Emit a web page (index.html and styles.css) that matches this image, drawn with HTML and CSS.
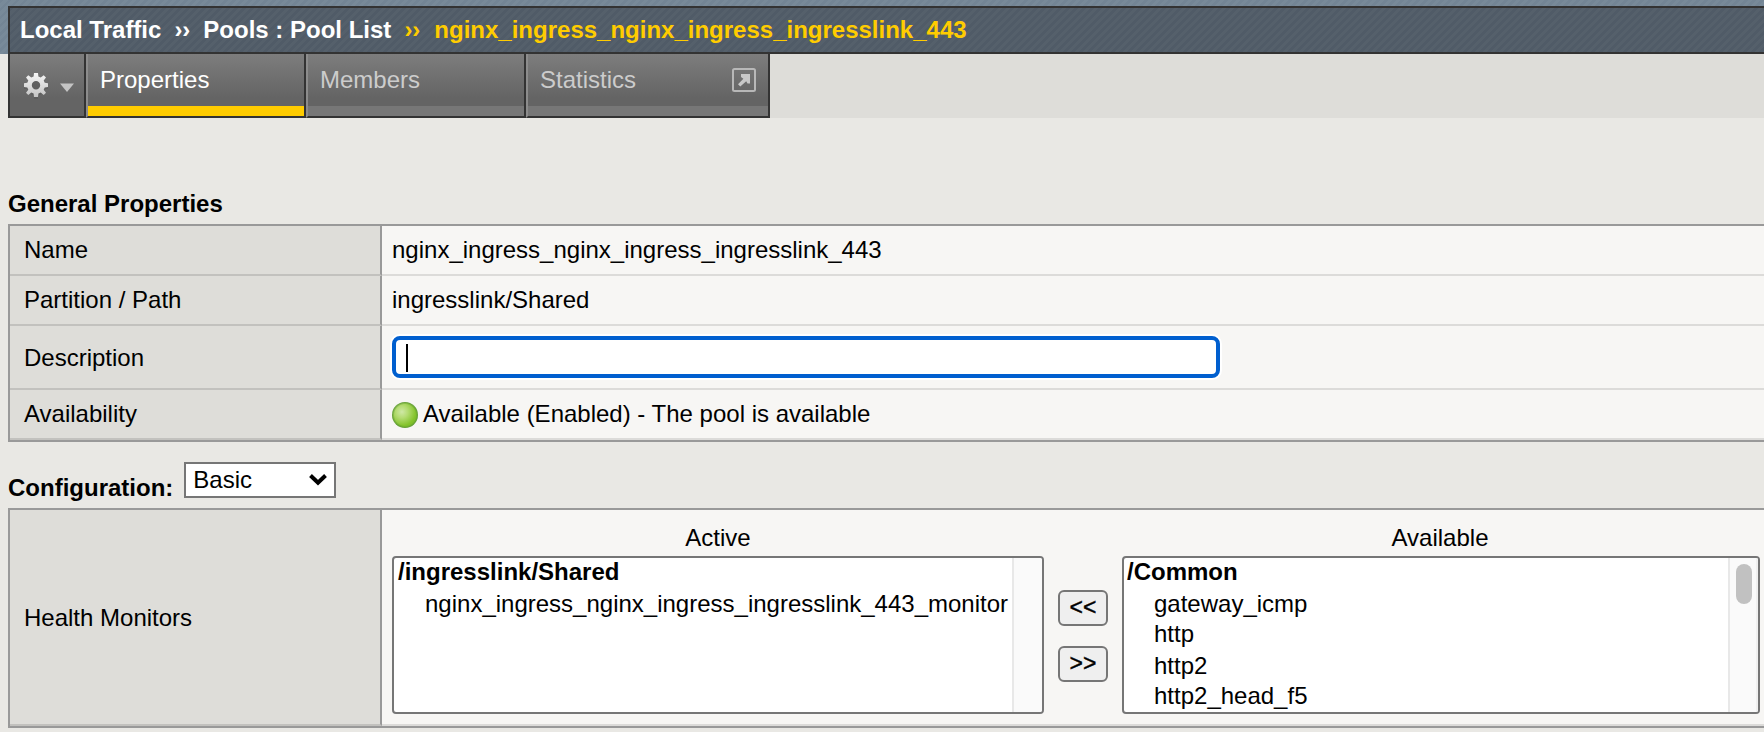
FILE: index.html
```html
<!DOCTYPE html>
<html lang="en">
<head>
<meta charset="utf-8">
<title>Pool Properties</title>
<link rel="stylesheet" href="styles.css">
</head>
<body>
<header class="top">
  <nav class="crumbs"><span class="crumb">Local Traffic</span><span class="sep">››</span><span class="crumb crumb-mid">Pools : Pool List</span><span class="sep current">››</span><span class="crumb current">nginx_ingress_nginx_ingress_ingresslink_443</span></nav>
  <div class="tabbar">
    <div class="tab gear">
      <svg class="gear-icon" width="26" height="28" viewBox="0 0 26 28">
        <defs><linearGradient id="gg" x1="0" y1="0" x2="0" y2="1"><stop offset="0" stop-color="#f6f6f6"/><stop offset="1" stop-color="#c4c4c4"/></linearGradient></defs>
        <g fill="#555" opacity=".5" transform="translate(0 2)"><circle cx="13" cy="13" r="9"/><path d="M11 1h4v24h-4zM1 11h24v4H1z"/></g>
        <g fill="url(#gg)">
          <path fill-rule="evenodd" d="M11 1h4l.4 3.600 2.300 1 3-2.400 2.300 2.300-2.300 3 1 2.300 3.300.4v3.800l-3.300.4-1 2.300 2.300 3-2.300 2.300-3-2.400-2.300 1L15 25h-4l-.4-3.400-2.300-1-3 2.400L3 20.700l2.300-3-1-2.300L1 15v-3.800l3.300-.4 1-2.300L3 5.500l2.300-2.300 3 2.400 2.300-1zM13 9a4.200 4.200 0 1 0 0 8.400A4.200 4.200 0 1 0 13 9z"/>
        </g>
      </svg>
      <svg class="drop-icon" width="16" height="10" viewBox="0 0 16 10"><path d="M1 .5h14L8 9z" fill="#c4c4c4"/></svg>
    </div>
    <div class="tab page active">Properties</div>
    <div class="tab page">Members</div>
    <div class="tab page stats">Statistics
      <svg class="ext" width="24" height="24" viewBox="0 0 24 24"><rect x="1" y="1" width="22" height="22" rx="1.500" fill="none" stroke="#b8b8b8" stroke-width="2"/><path d="M9 6h9v9.500h-2.500l-1.300-2.300L8.300 18.500 6 16.300l5.400-5.600L9 9z" fill="#c8c8c8"/></svg>
    </div>
  </div>
</header>
<main>
  <h2 class="heading">General Properties</h2>
  <div class="grid">
    <div class="row"><div class="label">Name</div><div class="value">nginx_ingress_nginx_ingress_ingresslink_443</div></div>
    <div class="row"><div class="label">Partition / Path</div><div class="value">ingresslink/Shared</div></div>
    <div class="row tall"><div class="label">Description</div><div class="value"><div class="input"><span class="caret"></span></div></div></div>
    <div class="row"><div class="label">Availability</div><div class="value"><span class="dot"></span>Available (Enabled) - The pool is available</div></div>
  </div>
  <div class="config"><h2 class="heading-config">Configuration:</h2>
    <div class="select">Basic<svg width="20" height="14" viewBox="0 0 20 14"><path d="M2.500 2.500 10 9.800l7.500-7.300" fill="none" stroke="#000" stroke-width="4"/></svg></div>
  </div>
  <div class="grid">
    <div class="row monitors"><div class="label">Health Monitors</div>
      <div class="value">
        <div class="col active-col"><div class="col-title">Active</div>
          <div class="list"><div class="options"><div class="group">/ingresslink/Shared</div><div class="opt">nginx_ingress_nginx_ingress_ingresslink_443_monitor</div></div><div class="track"></div></div>
        </div>
        <div class="buttons"><div class="btn">&lt;&lt;</div><div class="btn">&gt;&gt;</div></div>
        <div class="col avail-col"><div class="col-title">Available</div>
          <div class="list"><div class="options"><div class="group">/Common</div><div class="opt">gateway_icmp</div><div class="opt">http</div><div class="opt low">http2</div><div class="opt">http2_head_f5</div></div><div class="track"><span class="thumb"></span></div></div>
        </div>
      </div>
    </div>
  </div>
</main>
</body>
</html>
```
FILE: styles.css
```css
* { box-sizing: border-box; }
body {
  margin: 0;
  width: 1764px;
  height: 732px;
  overflow: hidden;
  background: #e9e8e4;
  color: #000;
  font: 24px/28px Arial, "Liberation Sans", sans-serif;
  white-space: nowrap;
}
.top {
  height: 118px;
  padding: 6px 0 0 8px;
  background: repeating-linear-gradient(135deg, #738595 0 2.828px, #788a99 2.828px 5.657px) 0 0 / 100% 54px no-repeat;
}
.crumbs {
  height: 48px;
  display: flex;
  align-items: center;
  padding: 0 0 1px 10px;
  border: 2px solid #333;
  border-right: 0;
  background: repeating-linear-gradient(135deg, #505b67 0 2.828px, #55606b 2.828px 5.657px);
  color: #fff;
  font-weight: bold;
}
.sep { margin: 0 13px; }
.sep.current { margin-right: 14px; }
.current { color: #fc0; }
.tabbar {
  height: 64px;
  display: flex;
  background: #deddd9;
}
.tab {
  height: 64px;
  border-right: 2px solid #333;
  border-bottom: 2px solid #333;
  background: linear-gradient(#7d7d7d, #646464 44px);
}
.gear {
  width: 78px;
  display: flex;
  align-items: flex-start;
  gap: 10px;
  padding: 18px 0 0 13px;
  border-left: 2px solid #333;
}
.drop-icon { margin-top: 11px; }
.page {
  width: 220px;
  display: flex;
  justify-content: space-between;
  padding: 12px 12px 0;
  border-left: 2px solid #8c8c8c;
  color: #ccc;
  background: linear-gradient(#777, #777) 0 52px / 100% 10px no-repeat, linear-gradient(#7d7d7d, #646464 44px);
}
.page.active {
  color: #fff;
  background: linear-gradient(#fc0, #fc0) 0 52px / 100% 10px no-repeat, linear-gradient(#7d7d7d, #646464 44px);
}
.page.stats { width: 244px; }
.ext { margin-top: 2px; }
main { padding: 72px 0 0 8px; }
.heading { margin: 0; height: 34px; font-size: 24px; font-weight: bold; }
.grid { border: 2px solid #999; border-right: 0; }
.row { display: flex; height: 50px; }
.row.tall { height: 64px; }
.row.monitors { height: 216px; }
.label {
  width: 372px;
  display: flex;
  align-items: center;
  padding-left: 14px;
  background: #deddd9;
  border-right: 2px solid #999;
  border-bottom: 2px solid #c2c1be;
}
.tall .label, .monitors .label { padding-top: 2px; }
.value {
  flex: 1;
  display: flex;
  align-items: center;
  padding-left: 10px;
  background: #f7f6f4;
  border-bottom: 2px solid #dcdbd9;
}
.input {
  width: 828px;
  height: 42px;
  padding: 4px 10px;
  background: #fff;
  border: 4px solid #005fcf;
  border-radius: 8px;
  box-shadow: 0 0 0 2px #fff;
}
.caret { display: block; width: 2px; height: 28px; background: #000; }
.dot {
  width: 26px;
  height: 26px;
  margin: 2px 5px 0 0;
  border-radius: 50%;
  background:
    radial-gradient(circle, transparent 10.5px, #5f9a35 13px),
    radial-gradient(circle at 38% 38%, #cfe8a6, #b4dc72 6px, #82c22a 14px);
}
.config { height: 66px; display: flex; padding-top: 20px; }
.heading-config { margin: 12px 11px 0 0; font-size: 24px; font-weight: bold; }
.select {
  width: 152px;
  height: 36px;
  display: flex;
  align-items: center;
  justify-content: space-between;
  padding: 0 6px 1px 7px;
  background: #fff;
  border: 2px solid #767676;
}
.monitors .value { align-items: flex-start; }
.col { padding-top: 14px; }
.active-col { width: 652px; }
.avail-col { width: 638px; }
.col-title { height: 32px; text-align: center; }
.avail-col .col-title { padding-right: 2px; }
.list {
  height: 158px;
  display: flex;
  overflow: hidden;
  background: #fff;
  border: 2px solid #767676;
  border-radius: 4px;
}
.options { flex: 1; min-width: 0; padding-left: 3px; }
.active-col .options { padding-left: 4px; }
.group { height: 32px; font-weight: bold; }
.opt { height: 30px; padding-left: 27px; }
.opt.low { height: 32px; padding-top: 2px; }
.track { width: 30px; padding: 6px 0 0 6px; background: #fafafa; border-left: 2px solid #e8e8e8; }
.thumb { display: block; width: 16px; height: 40px; border-radius: 8px; background: #c1c1c1; }
.avail-col .track { border-right: 2px solid #f0f0f0; }
.buttons { width: 50px; margin: 80px 14px 0; display: flex; flex-direction: column; gap: 20px; }
.btn {
  height: 36px;
  display: flex;
  align-items: center;
  justify-content: center;
  padding-bottom: 2px;
  background: #efefef;
  border: 2px solid #767676;
  border-radius: 6px;
  font-size: 23px;
  -webkit-text-stroke: .4px #000;
}
```
